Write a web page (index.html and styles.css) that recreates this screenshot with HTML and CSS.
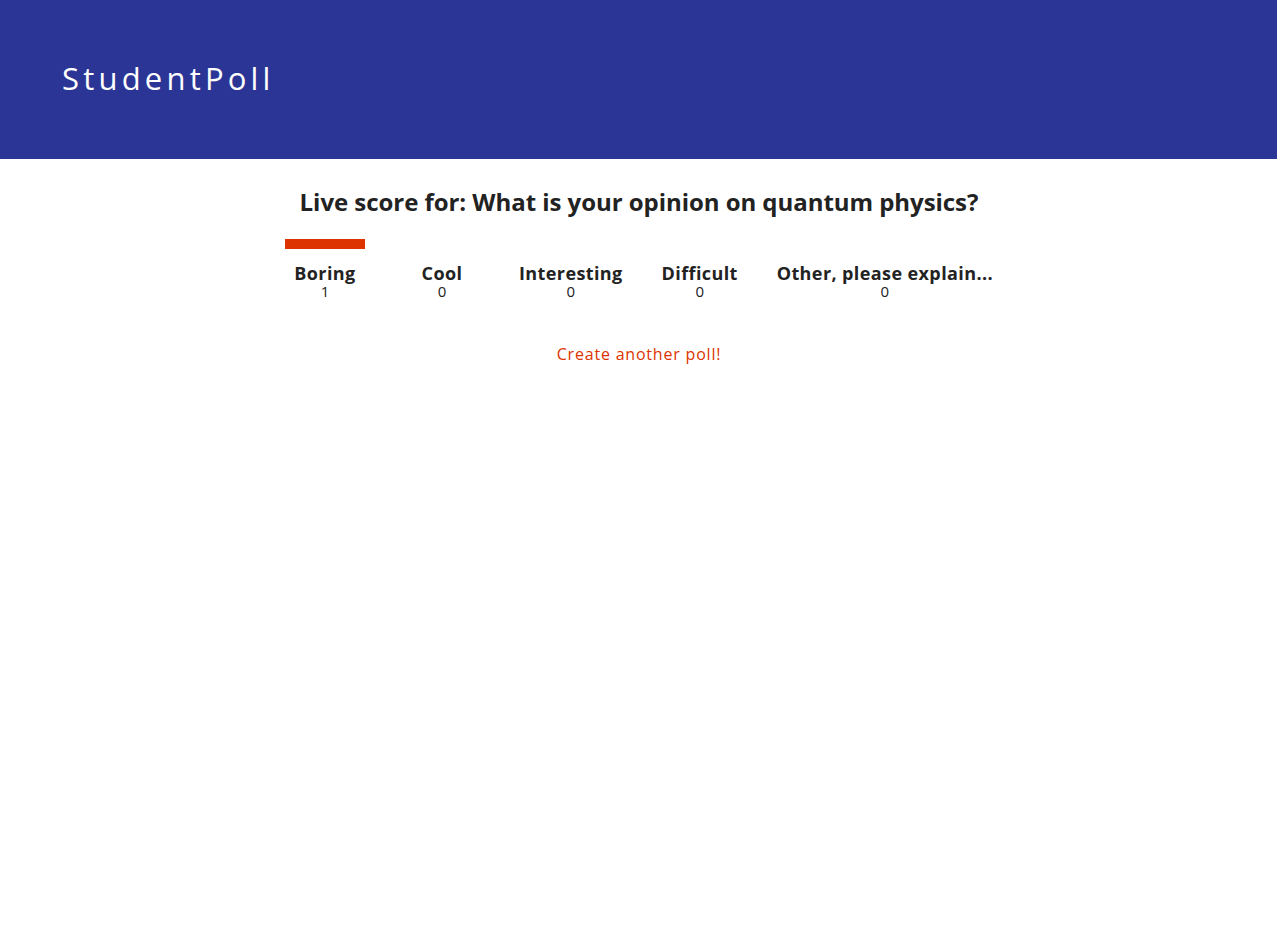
FILE: index.html
```html
<!DOCTYPE html>
<html>
<head>
<meta charset="utf-8">
<title>StudentPoll</title>
<link rel="stylesheet" href="styles.css">
</head>
<body>
<header class="topbar">
  <div class="brand">StudentPoll</div>
</header>
<main class="content">
  <h2 class="question">Live score for: What is your opinion on quantum physics?</h2>
  <div class="chart">
    <div class="option">
      <div class="bar" style="height:10px"></div>
      <div class="label">Boring</div>
      <div class="count">1</div>
    </div>
    <div class="option">
      <div class="bar" style="height:0px"></div>
      <div class="label">Cool</div>
      <div class="count">0</div>
    </div>
    <div class="option">
      <div class="bar" style="height:0px"></div>
      <div class="label">Interesting</div>
      <div class="count">0</div>
    </div>
    <div class="option">
      <div class="bar" style="height:0px"></div>
      <div class="label">Difficult</div>
      <div class="count">0</div>
    </div>
    <div class="option">
      <div class="bar" style="height:0px"></div>
      <div class="label">Other, please explain...</div>
      <div class="count">0</div>
    </div>
  </div>
  <a class="again" href="#">Create another poll!</a>
</main>
</body>
</html>
```
FILE: styles.css
```css
html, body {
  margin: 0;
  padding: 0;
  background: #ffffff;
  font-family: "Open Sans", "Noto Sans", sans-serif;
  color: #222222;
}

.topbar {
  background: #2b3595;
  height: 159px;
  width: 1277px;
  box-sizing: border-box;
  padding: 58px 0 0 62px;
}

.brand {
  color: #ffffff;
  font-size: 31px;
  font-weight: 500;
  letter-spacing: 4.2px;
  line-height: 40px;
}

.content {
  display: flex;
  flex-direction: column;
  align-items: center;
}

.question {
  margin: 25px 0 0 0;
  font-size: 24px;
  font-weight: 700;
  line-height: 36px;
  letter-spacing: -0.05px;
}

.chart {
  display: flex;
  align-items: flex-end;
  gap: 37px;
  margin-top: 19px;
}

.option {
  min-width: 80px;
  display: flex;
  flex-direction: column;
  align-items: stretch;
  text-align: center;
}

.bar {
  background: #dd3300;
  margin-bottom: 14px;
}

.label {
  font-size: 18px;
  font-weight: 700;
  line-height: 20px;
  letter-spacing: 0.4px;
}

.count {
  font-size: 15px;
  line-height: 16px;
}

.again {
  margin-top: 44px;
  color: #dd3300;
  text-decoration: none;
  font-size: 16px;
  letter-spacing: 0.8px;
}
```
